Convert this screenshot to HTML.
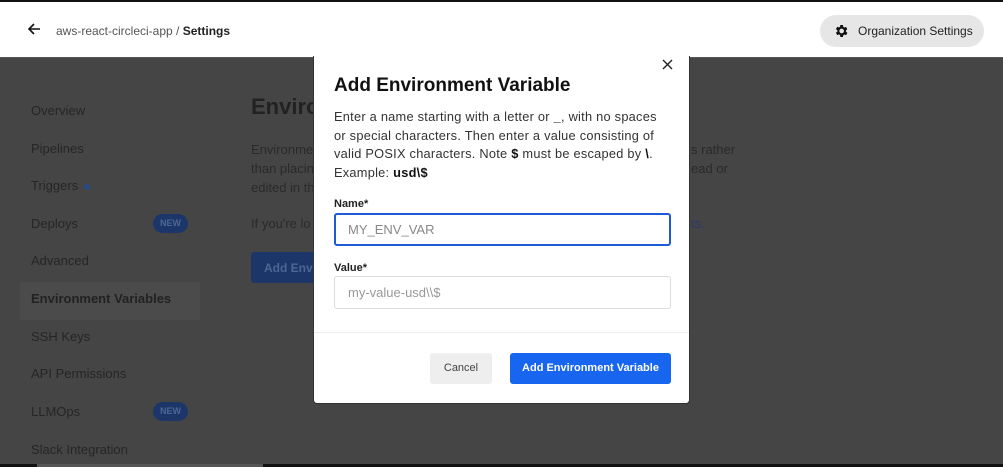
<!DOCTYPE html>
<html><head><meta charset="utf-8"><style>
*{box-sizing:border-box;margin:0;padding:0}
body{width:1003px;height:467px;overflow:hidden;font-family:"Liberation Sans",sans-serif;background:#454545;position:relative}
.hdr{position:absolute;left:0;top:0;width:1003px;height:58px;background:#fff;border-top:2px solid #111;border-bottom:1px solid #555}
.crumb{position:absolute;left:56px;top:22px;font-size:12px;color:#555}
.crumb b{color:#222;font-weight:bold}
.back{position:absolute;left:26px;top:19px}
.org{position:absolute;left:820px;top:13px;width:164px;height:32px;border-radius:16px;background:#e6e6e6;font-size:12px;color:#222;padding:9px 0 0 38px}
.org svg{position:absolute;left:13px;top:8px}
.nav{position:absolute;left:31px;font-size:13px;color:#262626}
.new{position:absolute;left:153px;width:35px;height:19px;border-radius:10px;background:#1c3669;color:#4d6693;font-size:9px;font-weight:bold;text-align:center;line-height:19px}
.sel{position:absolute;left:20px;top:282px;width:180px;height:38px;background:#4b4b4b}
.mt{position:absolute;color:#2a2a2a;font-size:13px}
.modal{position:absolute;left:313px;top:56px;width:377px;height:348px;background:#fff;border-radius:0 0 4px 4px;border:1px solid #333;border-top:none}
.modal h2{position:absolute;left:20px;top:19px;font-size:19px;font-weight:bold;color:#111}
.desc{position:absolute;left:20px;top:52px;width:332px;font-size:12.8px;letter-spacing:0.25px;line-height:18.7px;color:#333}
.desc b{color:#111}
.lbl{position:absolute;left:20px;font-size:11px;font-weight:bold;color:#222}
.inp{position:absolute;left:20px;width:337px;height:33px;border:1px solid #ddd;border-radius:3px;font-size:13px;color:#999;padding:8px 0 0 13px}
.inp.f{border:2px solid #1f5ad6;padding:7px 0 0 12px;color:#888}
.sep{position:absolute;left:0;top:276px;width:375px;height:1px;background:#eee}
.btn{position:absolute;top:297px;height:31px;border-radius:3px;font-size:11px;text-align:center;line-height:31px}
</style></head><body>
<div class="hdr">
<svg class="back" width="16" height="16" viewBox="0 0 16 16"><path d="M14 8H3M8 3L3 8l5 5" fill="none" stroke="#111" stroke-width="1.6"/></svg>
<div class="crumb">aws-react-circleci-app / <b>Settings</b></div>
<div class="org"><svg width="16" height="16" viewBox="0 0 24 24"><path fill="#111" d="M19.4 13a7.5 7.5 0 0 0 0-2l2.1-1.6-2-3.5-2.5 1a7.6 7.6 0 0 0-1.700-1L15 3h-4l-.4 2.7a7.6 7.6 0 0 0-1.7 1l-2.5-1-2 3.5L6.6 11a7.5 7.5 0 0 0 0 2l-2.2 1.6 2 3.5 2.5-1a7.6 7.6 0 0 0 1.7 1L11 21h4l.4-2.7a7.6 7.6 0 0 0 1.7-1l2.5 1 2-3.5zM13 15.5a3.5 3.5 0 1 1 0-7 3.5 3.5 0 0 1 0 7z"/></svg>Organization Settings</div>
</div>
<div class="sel"></div>
<div class="nav" style="top:103px">Overview</div>
<div class="nav" style="top:141px">Pipelines</div>
<div class="nav" style="top:178px">Triggers <span style="display:inline-block;width:6px;height:6px;border-radius:3px;background:#2b4a85;margin-left:2px;vertical-align:middle"></span></div>
<div class="nav" style="top:216px">Deploys</div><div class="new" style="top:214px">NEW</div>
<div class="nav" style="top:253px">Advanced</div>
<div class="nav" style="top:291px;font-weight:bold;color:#222">Environment Variables</div>
<div class="nav" style="top:329px">SSH Keys</div>
<div class="nav" style="top:366px">API Permissions</div>
<div class="nav" style="top:404px">LLMOps</div><div class="new" style="top:402px">NEW</div>
<div class="nav" style="top:442px">Slack Integration</div>
<div class="mt" style="left:251px;top:94px;font-size:22px;font-weight:bold;color:#222">Environment</div>
<div class="mt" style="left:251px;top:140px;line-height:19px">Environment<br>than placing<br>edited in the</div>
<div class="mt" style="left:251px;top:216px">If you're lo</div>
<div style="position:absolute;left:251px;top:252px;width:70px;height:31px;background:#1c3669;border-radius:3px;color:#4d6693;font-size:12px;font-weight:bold;padding:9px 0 0 13px">Add Envir</div>
<div class="mt" style="left:691px;top:140px;line-height:19px">s rather<br>ead or</div>
<div class="mt" style="left:691px;top:216px;color:#2e3a66">ts.</div>
<div style="position:absolute;left:0;top:464px;width:1003px;height:3px;background:#111"></div>
<div style="position:absolute;left:37px;top:464px;width:226px;height:3px;background:#555"></div>
<div class="modal">
<svg style="position:absolute;left:348px;top:3px" width="11" height="11" viewBox="0 0 11 11"><path d="M1 1l9 9M10 1l-9 9" stroke="#222" stroke-width="1.4"/></svg>
<h2>Add Environment Variable</h2>
<div class="desc">Enter a name starting with a letter or <b>_</b>, with no spaces or special characters. Then enter a value consisting of valid POSIX characters. Note <b>$</b> must be escaped by <b>\</b>. Example: <b>usd\$</b></div>
<div class="lbl" style="top:142px">Name*</div>
<div class="inp f" style="top:157px">MY_ENV_VAR</div>
<div class="lbl" style="top:206px">Value*</div>
<div class="inp" style="top:220px">my-value-usd\\$</div>
<div class="sep"></div>
<div class="btn" style="left:116px;width:62px;background:#eee;color:#444">Cancel</div>
<div class="btn" style="left:196px;width:161px;background:#1865f0;color:#fff;font-weight:bold">Add Environment Variable</div>
</div>
</body></html>
